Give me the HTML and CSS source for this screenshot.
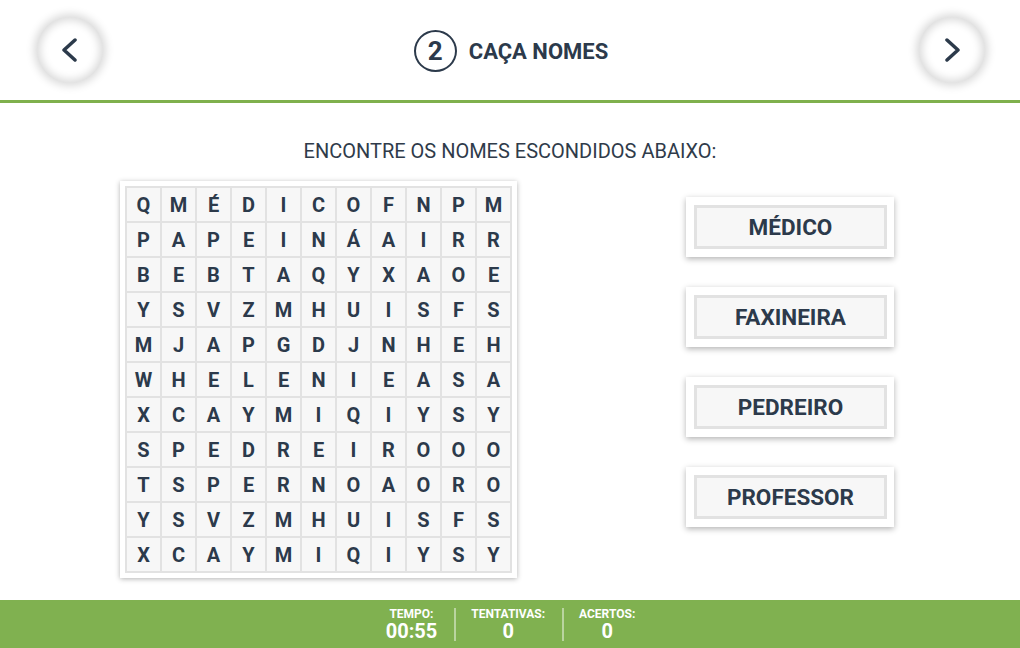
FILE: index.html
```html
<!DOCTYPE html>
<html lang="pt">
<head>
<meta charset="utf-8">
<title>Caça Nomes</title>
<link rel="stylesheet" href="styles.css">
</head>
<body>
<div class="page">
  <header class="header">
    <button class="nav-btn" aria-label="Anterior">
      <svg width="24" height="24" viewBox="0 0 24 24"><path d="M17 2 L6 12 L17 22" fill="none" stroke="#2c3a4b" stroke-width="3.5" stroke-linecap="round" stroke-linejoin="round"/></svg>
    </button>
    <div class="title">
      <span class="num">2</span>
      <span class="title-text">CAÇA NOMES</span>
    </div>
    <button class="nav-btn" aria-label="Próximo">
      <svg width="24" height="24" viewBox="0 0 24 24"><path d="M7 2 L18 12 L7 22" fill="none" stroke="#2c3a4b" stroke-width="3.5" stroke-linecap="round" stroke-linejoin="round"/></svg>
    </button>
  </header>

  <main class="main">
    <h1 class="subtitle">ENCONTRE OS NOMES ESCONDIDOS ABAIXO:</h1>
    <div class="content">
      <div class="board">
        <div class="grid">
          <div class="cell">Q</div><div class="cell">M</div><div class="cell">É</div><div class="cell">D</div><div class="cell">I</div><div class="cell">C</div><div class="cell">O</div><div class="cell">F</div><div class="cell">N</div><div class="cell">P</div><div class="cell">M</div>
          <div class="cell">P</div><div class="cell">A</div><div class="cell">P</div><div class="cell">E</div><div class="cell">I</div><div class="cell">N</div><div class="cell">Á</div><div class="cell">A</div><div class="cell">I</div><div class="cell">R</div><div class="cell">R</div>
          <div class="cell">B</div><div class="cell">E</div><div class="cell">B</div><div class="cell">T</div><div class="cell">A</div><div class="cell">Q</div><div class="cell">Y</div><div class="cell">X</div><div class="cell">A</div><div class="cell">O</div><div class="cell">E</div>
          <div class="cell">Y</div><div class="cell">S</div><div class="cell">V</div><div class="cell">Z</div><div class="cell">M</div><div class="cell">H</div><div class="cell">U</div><div class="cell">I</div><div class="cell">S</div><div class="cell">F</div><div class="cell">S</div>
          <div class="cell">M</div><div class="cell">J</div><div class="cell">A</div><div class="cell">P</div><div class="cell">G</div><div class="cell">D</div><div class="cell">J</div><div class="cell">N</div><div class="cell">H</div><div class="cell">E</div><div class="cell">H</div>
          <div class="cell">W</div><div class="cell">H</div><div class="cell">E</div><div class="cell">L</div><div class="cell">E</div><div class="cell">N</div><div class="cell">I</div><div class="cell">E</div><div class="cell">A</div><div class="cell">S</div><div class="cell">A</div>
          <div class="cell">X</div><div class="cell">C</div><div class="cell">A</div><div class="cell">Y</div><div class="cell">M</div><div class="cell">I</div><div class="cell">Q</div><div class="cell">I</div><div class="cell">Y</div><div class="cell">S</div><div class="cell">Y</div>
          <div class="cell">S</div><div class="cell">P</div><div class="cell">E</div><div class="cell">D</div><div class="cell">R</div><div class="cell">E</div><div class="cell">I</div><div class="cell">R</div><div class="cell">O</div><div class="cell">O</div><div class="cell">O</div>
          <div class="cell">T</div><div class="cell">S</div><div class="cell">P</div><div class="cell">E</div><div class="cell">R</div><div class="cell">N</div><div class="cell">O</div><div class="cell">A</div><div class="cell">O</div><div class="cell">R</div><div class="cell">O</div>
          <div class="cell">Y</div><div class="cell">S</div><div class="cell">V</div><div class="cell">Z</div><div class="cell">M</div><div class="cell">H</div><div class="cell">U</div><div class="cell">I</div><div class="cell">S</div><div class="cell">F</div><div class="cell">S</div>
          <div class="cell">X</div><div class="cell">C</div><div class="cell">A</div><div class="cell">Y</div><div class="cell">M</div><div class="cell">I</div><div class="cell">Q</div><div class="cell">I</div><div class="cell">Y</div><div class="cell">S</div><div class="cell">Y</div>
        </div>
      </div>
      <div class="words">
        <div class="word"><div class="word-inner">MÉDICO</div></div>
        <div class="word"><div class="word-inner">FAXINEIRA</div></div>
        <div class="word"><div class="word-inner">PEDREIRO</div></div>
        <div class="word"><div class="word-inner">PROFESSOR</div></div>
      </div>
    </div>
  </main>

  <footer class="footer">
    <div class="stat">
      <span class="stat-label">TEMPO:</span>
      <span class="stat-value">00:55</span>
    </div>
    <div class="stat">
      <span class="stat-label">TENTATIVAS:</span>
      <span class="stat-value">0</span>
    </div>
    <div class="stat">
      <span class="stat-label">ACERTOS:</span>
      <span class="stat-value">0</span>
    </div>
  </footer>
</div>
</body>
</html>
```

FILE: styles.css
```css
* { box-sizing: border-box; }

html, body {
  margin: 0;
  padding: 0;
  background: #ffffff;
}

body {
  font-family: Roboto, "Liberation Sans", sans-serif;
  color: #2c3a4b;
}

.page {
  width: 1020px;
  height: 648px;
  display: flex;
  flex-direction: column;
  overflow: hidden;
}

.header {
  height: 103px;
  flex: none;
  border-bottom: 3px solid #7fb04d;
  display: flex;
  align-items: center;
  justify-content: space-between;
  padding: 0 35px 0 37px;
}

.nav-btn {
  width: 66px;
  height: 66px;
  border-radius: 50%;
  border: none;
  background: #ffffff;
  box-shadow: 0 0 8px 3px rgba(0, 0, 0, 0.15), inset 0 0 8px 3px rgba(0, 0, 0, 0.15);
  display: flex;
  align-items: center;
  justify-content: center;
  padding: 0;
}

.title {
  display: flex;
  align-items: center;
  gap: 12px;
  margin-top: 2px;
}

.num {
  width: 43px;
  height: 42px;
  border: 2px solid #2c3a4b;
  border-radius: 50%;
  display: flex;
  align-items: center;
  justify-content: center;
  font-size: 26px;
  font-weight: 700;
}

.title-text {
  font-size: 22px;
  font-weight: 700;
}

.main {
  flex: 1;
  display: flex;
  flex-direction: column;
}

.subtitle {
  margin: 38px 0 20px;
  font-size: 20px;
  line-height: 20px;
  font-weight: 400;
  text-align: center;
  color: #2f3b4a;
}

.content {
  display: flex;
  justify-content: space-between;
  align-items: flex-start;
  padding: 0 126px 0 120px;
}

.board {
  background: #ffffff;
  padding: 5px;
  box-shadow: 0 1px 5px rgba(0, 0, 0, 0.3);
}

.grid {
  display: grid;
  grid-template-columns: repeat(11, 33px);
  grid-auto-rows: 33px;
  gap: 2px;
  padding: 2px;
  background: #e2e2e2;
}

.cell {
  background: #f7f7f7;
  display: flex;
  align-items: center;
  justify-content: center;
  font-size: 20px;
  font-weight: 700;
  color: #2c3a4b;
}

.words {
  display: flex;
  flex-direction: column;
  gap: 30px;
  margin-top: 16px;
}

.word {
  width: 208px;
  height: 60px;
  padding: 8px 7px 8px 8px;
  background: #ffffff;
  box-shadow: 0 2px 6px rgba(0, 0, 0, 0.3);
}

.word-inner {
  height: 100%;
  border: 3px solid #e2e2e2;
  background: #f7f7f7;
  display: flex;
  align-items: center;
  justify-content: center;
  font-size: 22.5px;
  font-weight: 700;
  color: #2c3a4b;
}

.footer {
  height: 48px;
  flex: none;
  background: #80b150;
  display: flex;
  justify-content: center;
  align-items: center;
  padding-left: 3px;
}

.stat {
  display: flex;
  flex-direction: column;
  align-items: center;
  padding: 0 17px 0 15px;
  height: 33px;
  color: #ffffff;
  font-weight: 700;
}

.stat + .stat {
  border-left: 2px solid rgba(255, 255, 255, 0.45);
}

.stat-label {
  font-size: 12px;
  line-height: 13px;
}

.stat-value {
  font-size: 20px;
  line-height: 20px;
}
```
